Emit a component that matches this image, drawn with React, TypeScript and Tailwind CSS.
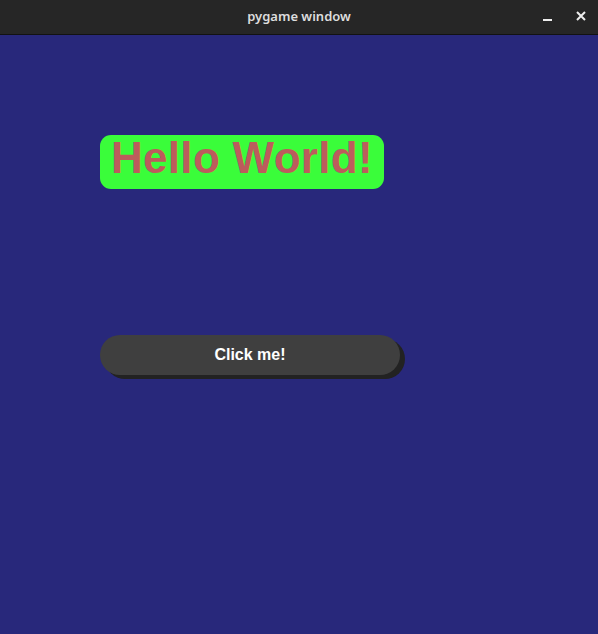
import React from "react";

export default function App() {
  return (
    <div className="w-[598px] h-[634px] flex flex-col bg-[#28287b] overflow-hidden">
      <div className="h-[35px] shrink-0 bg-[#262626] border-b border-[#121212] relative flex items-center justify-center">
        <span className="text-[13px] text-[#dddddd] font-semibold" style={{ fontFamily: '"Noto Sans", "DejaVu Sans", sans-serif' }}>
          pygame window
        </span>
        <div className="absolute right-0 top-0 h-full flex items-center">
          <div className="w-[9px] h-[2px] bg-[#eeeeee] mr-[24px] mt-[6px]" />
          <svg width="10" height="10" viewBox="0 0 10 10" className="mr-[12px] mt-[-3px]">
            <path d="M1 1 L9 9 M9 1 L1 9" stroke="#eeeeee" strokeWidth="2" />
          </svg>
        </div>
      </div>
      <div className="flex-1 flex flex-col pl-[100px] pt-[100px]">
        <div
          className="w-[284px] h-[54px] rounded-[11px] bg-[#3afd3a] pl-[11px] pt-[1px] text-[#bc5c5c] font-bold text-[44px] tracking-[0.3px] leading-[44px]"
          style={{ fontFamily: '"Liberation Sans", Arial, sans-serif' }}
        >
          Hello World!
        </div>
        <div className="mt-[146px] relative w-[300px] h-[40px]">
          <div className="absolute left-[5px] top-[4px] w-[300px] h-[40px] rounded-full bg-[#222222]" />
          <div
            className="relative w-[300px] h-[40px] rounded-full bg-[#3f3f3f] flex items-center justify-center text-white font-bold text-[16px]"
            style={{ fontFamily: '"Liberation Sans", Arial, sans-serif' }}
          >
            Click me!
          </div>
        </div>
      </div>
    </div>
  );
}
